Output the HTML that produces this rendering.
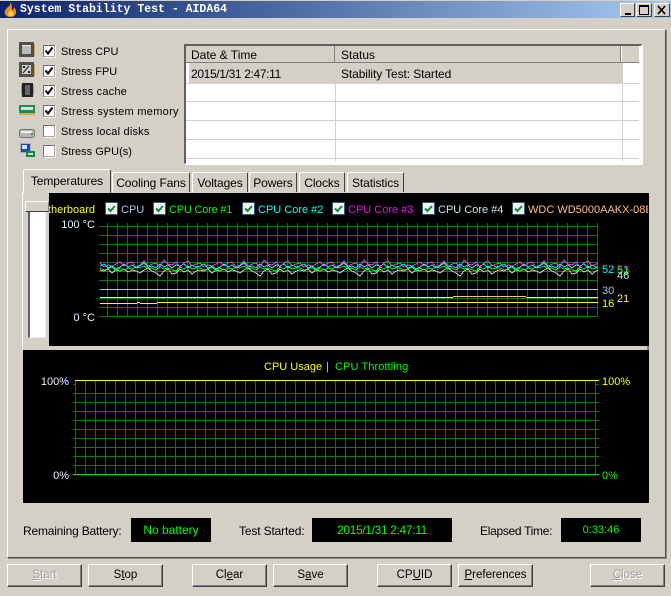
<!DOCTYPE html>
<html><head><meta charset="utf-8"><style>
html,body{margin:0;padding:0;overflow:hidden}
body{width:671px;height:596px;overflow:hidden;background:#d4d0c8;position:relative;font:11px/14px "Liberation Sans",sans-serif;color:#000}
.a,.t,.cb,.btn,.tab,.lg,.bx,.k{position:absolute}
.t{white-space:nowrap}
.f12{font-size:12px}
.wrap{position:absolute;left:0;top:0;width:671px;height:596px;z-index:5;overflow:hidden}
.cb{width:10px;height:10px;left:43px;background:#fff;border:1px solid #808080;border-color:#707070 #a8a8a0 #a8a8a0 #707070;box-shadow:1px 1px 0 #f4f2ec}
.cb svg{position:absolute;left:0;top:0}
.btn{top:564px;width:75px;height:23px;box-sizing:border-box;background:#d4d0c8;border:1px solid;border-color:#fff #404040 #404040 #fff;box-shadow:inset -1px -1px 0 #808080;text-align:center;line-height:21px;font-size:11.5px}
.dis{color:#a0a0a0;text-shadow:1px 1px 0 #fff}
.tab{top:172px;height:20px;box-sizing:border-box;border:1px solid;border-color:#fff #404040 transparent #fff;border-bottom:0;border-radius:2px 2px 0 0;text-align:center;line-height:20px;background:#d4d0c8;font-size:12px;letter-spacing:-.1px}
.lg{top:202px;width:11px;height:11px;background:#f4f4f4;border:1px solid #2f5a80}
.lg svg{position:absolute;left:0;top:0}
.l{position:absolute;top:203px;white-space:nowrap;line-height:14px}
.bx{background:#000;color:#0f0;text-align:center;top:518px;height:24px;line-height:24px;font-size:12px}
.k{width:15px;height:14px;background:#d4d0c8;top:3px;box-sizing:border-box;border:1px solid;border-color:#fff #404040 #404040 #fff}
.row{position:absolute;left:186px;width:453px;height:1px;background:#d4d0c8}
</style></head><body>

<!-- title bar -->
<div class="a" style="left:0;top:0;width:671px;height:1px;background:#d4d0c8"></div>
<div class="a" style="left:0;top:1px;width:671px;height:17px;background:linear-gradient(90deg,#0a246a,#a6caf0)"></div>
<svg class="a" style="left:3px;top:2px" width="15" height="16" viewBox="0 0 15 16"><path d="M7 0C8 3 6 4 4 6 2 8 1 10 2 12c1 2 3 3 6 3s5-2 5-5c0-2-1-4-2-5 0 2-1 3-2 3 0-3 0-6-2-8z" fill="#f08a1c"/><path d="M7 7c1 2-2 3-2 5 0 2 1 2 3 2s3-2 2-4c-1 0-2 0-3-3z" fill="#ffd040"/></svg>
<div class="t" style="left:20px;top:3px;font:bold 11.5px/14px 'Liberation Mono',monospace;color:#fff">System Stability Test - AIDA64</div>
<div class="k" style="left:620px"><div class="a" style="left:4px;top:9px;width:6px;height:2px;background:#000"></div></div>
<div class="k" style="left:636px;width:16px"><div class="a" style="left:2px;top:1px;width:8px;height:7px;border:1px solid #000;border-top-width:2px"></div></div>
<div class="k" style="left:654px;width:16px"><svg class="a" style="left:2px;top:1px" width="10" height="10"><path d="M1 1l7 8M8 1l-7 8" stroke="#000" stroke-width="1.7"/></svg></div>

<!-- outer panel -->
<div class="a" style="left:7px;top:29px;width:657px;height:527px;border:1px solid;border-color:#fff #505050 #505050 #fff;box-shadow:1px 1px 0 #908c84"></div>

<!-- icons -->
<svg class="a" style="left:18px;top:41px" width="18" height="120" viewBox="0 0 18 120">
<rect x="1" y="1" width="15" height="15" fill="#505050"/><rect x="4" y="4" width="9" height="9" fill="#bbb"/><rect x="4" y="4" width="9" height="1" fill="#eee"/><rect x="16" y="3" width="1" height="12" fill="#c8a040"/>
<rect x="1" y="21" width="15" height="15" fill="#505050"/><rect x="4" y="24" width="9" height="9" fill="#ccc"/><path d="M5 32l6-7" stroke="#222"/><rect x="5" y="25" width="2" height="2" fill="#222"/><rect x="10" y="30" width="2" height="2" fill="#222"/><rect x="16" y="23" width="1" height="12" fill="#c8a040"/>
<rect x="4" y="42" width="11" height="14" fill="#222"/><rect x="7" y="44" width="5" height="10" fill="#666"/><rect x="3" y="44" width="1" height="10" fill="#999"/><rect x="15" y="44" width="1" height="10" fill="#999"/>
<rect x="1" y="64" width="16" height="8" fill="#1d8a5a"/><rect x="3" y="66" width="12" height="3" fill="#cfe8d0"/><rect x="1" y="72" width="16" height="2" fill="#d0b040"/>
<rect x="1.500" y="88.500" width="15" height="8" rx="2" fill="#b8b8b8" stroke="#777"/><rect x="3" y="90" width="11" height="2" fill="#eee"/><rect x="13" y="92" width="2" height="2" fill="#3a3"/>
<rect x="2.500" y="102.500" width="10" height="9" fill="#1a48b0" stroke="#aab"/><rect x="4" y="104" width="5" height="4" fill="#cfe0ff"/><rect x="8" y="110" width="9" height="6" fill="#2a7a4a"/><rect x="10" y="112" width="5" height="2" fill="#9fc"/>
</svg>

<!-- stress options -->
<div class="cb" style="top:45px"><svg width="10" height="10"><path d="M1.500 4.500l2.500 3 4.500-6" fill="none" stroke="#000" stroke-width="2"/></svg></div>
<div class="cb" style="top:65px"><svg width="10" height="10"><path d="M1.500 4.500l2.500 3 4.500-6" fill="none" stroke="#000" stroke-width="2"/></svg></div>
<div class="cb" style="top:85px"><svg width="10" height="10"><path d="M1.500 4.500l2.500 3 4.500-6" fill="none" stroke="#000" stroke-width="2"/></svg></div>
<div class="cb" style="top:105px"><svg width="10" height="10"><path d="M1.500 4.500l2.500 3 4.500-6" fill="none" stroke="#000" stroke-width="2"/></svg></div>
<div class="cb" style="top:125px"></div>
<div class="cb" style="top:145px"></div>
<div class="t" style="left:61px;top:45px">Stress CPU</div>
<div class="t" style="left:61px;top:65px">Stress FPU</div>
<div class="t" style="left:61px;top:85px;letter-spacing:.2px">Stress cache</div>
<div class="t" style="left:61px;top:105px;letter-spacing:.3px">Stress system memory</div>
<div class="t" style="left:61px;top:125px;letter-spacing:.2px">Stress local disks</div>
<div class="t" style="left:61px;top:145px">Stress GPU(s)</div>

<!-- table -->
<div class="a" style="left:184px;top:44px;width:455px;height:117px;background:#fff;border-top:2px solid #606060;border-left:2px solid #606060;border-right:1px solid #fff;border-bottom:1px solid #fff;box-shadow:1px 1px 0 #fff"></div>
<div class="a" style="left:186px;top:46px;width:453px;height:16px;background:#d4d0c8"></div>
<div class="a" style="left:186px;top:62px;width:453px;height:1px;background:#808080"></div>
<div class="a" style="left:334px;top:46px;width:1px;height:16px;background:#808080"></div>
<div class="a" style="left:620px;top:46px;width:1px;height:16px;background:#808080"></div>
<div class="a" style="left:621px;top:46px;width:1px;height:16px;background:#fff"></div>
<div class="a" style="left:189px;top:63px;width:434px;height:20px;background:#d4d0c8"></div>
<div class="a" style="left:335px;top:83px;width:1px;height:78px;background:#d4d0c8"></div>
<div class="a" style="left:622px;top:83px;width:1px;height:78px;background:#d4d0c8"></div>
<div class="row" style="top:83px"></div><div class="row" style="top:101px"></div><div class="row" style="top:120px"></div><div class="row" style="top:139px"></div><div class="row" style="top:158px"></div>
<div class="t f12" style="left:191px;top:48px">Date &amp; Time</div>
<div class="t f12" style="left:341px;top:48px">Status</div>
<div class="t f12" style="left:191px;top:67px;letter-spacing:-.35px">2015/1/31 2:47:11</div>
<div class="t f12" style="left:341px;top:67px;letter-spacing:-.1px">Stability Test: Started</div>

<!-- tabs -->
<div class="a" style="left:22px;top:192px;width:1px;height:158px;background:#fff"></div>
<div class="a" style="left:647px;top:346px;width:2px;height:4px;background:#808080"></div>
<div class="tab" style="left:23px;top:169px;width:88px;height:24px;line-height:22px;z-index:2">Temperatures</div>
<div class="tab" style="left:112px;width:78px">Cooling Fans</div>
<div class="tab" style="left:192px;width:56px">Voltages</div>
<div class="tab" style="left:249px;width:48px">Powers</div>
<div class="tab" style="left:299px;width:46px">Clocks</div>
<div class="tab" style="left:347px;width:57px">Statistics</div>

<!-- slider -->
<div class="a" style="left:28px;top:212px;width:15px;height:125px;background:#fff;border-left:2px solid #606060;border-right:1px solid #eee;border-bottom:1px solid #eee"></div>
<div class="a" style="left:25px;top:201px;width:24px;height:11px;box-sizing:border-box;background:#d4d0c8;border:1px solid;border-color:#fff #808080 #404040 #fff"></div>

<!-- chart 1 -->
<div class="a" style="left:49px;top:193px;width:600px;height:153px;background:#000;overflow:hidden;z-index:3">
  <div class="l" style="right:554px;top:10px;color:#ff0">Motherboard</div>
</div>
<div class="wrap">
<div class="lg" style="left:105px"><svg width="11" height="11"><path d="M2 5.500l2.500 2.500 4.500-5" fill="none" stroke="#128a2c" stroke-width="2"/></svg></div>
<div class="l" style="left:121px;color:#a6caf0">CPU</div>
<div class="lg" style="left:153px"><svg width="11" height="11"><path d="M2 5.500l2.500 2.500 4.500-5" fill="none" stroke="#128a2c" stroke-width="2"/></svg></div>
<div class="l" style="left:169px;color:#0f0;letter-spacing:-.2px">CPU Core #1</div>
<div class="lg" style="left:242px"><svg width="11" height="11"><path d="M2 5.500l2.500 2.500 4.500-5" fill="none" stroke="#128a2c" stroke-width="2"/></svg></div>
<div class="l" style="left:258px;color:#0ff">CPU Core #2</div>
<div class="lg" style="left:332px"><svg width="11" height="11"><path d="M2 5.500l2.500 2.500 4.500-5" fill="none" stroke="#128a2c" stroke-width="2"/></svg></div>
<div class="l" style="left:348px;color:#f0f">CPU Core #3</div>
<div class="lg" style="left:422px"><svg width="11" height="11"><path d="M2 5.500l2.500 2.500 4.500-5" fill="none" stroke="#128a2c" stroke-width="2"/></svg></div>
<div class="l" style="left:438px;color:#c8e4e8">CPU Core #4</div>
<div class="lg" style="left:512px"><svg width="11" height="11"><path d="M2 5.500l2.500 2.500 4.500-5" fill="none" stroke="#128a2c" stroke-width="2"/></svg></div>
<div style="position:absolute;left:528px;top:203px;width:120px;overflow:hidden"><div style="white-space:nowrap;color:#ffc080">WDC WD5000AAKX-08E</div></div>

<div class="t" style="right:576px;top:218px;color:#e8f4ff">100 °C</div>
<div class="t" style="right:576px;top:311px;color:#e8f4ff">0 °C</div>

<div class="a" style="left:107px;top:223px;width:491px;height:94px;background:repeating-linear-gradient(90deg,#008000 0 1px,transparent 1px 10px)"></div>
<div class="a" style="left:99px;top:226px;width:499px;height:91px;background:repeating-linear-gradient(180deg,#008000 0 1px,transparent 1px 9px)"></div>

<svg class="a" style="left:100px;top:255px" width="498" height="55" viewBox="0 0 498 55" shape-rendering="crispEdges">
<defs>
<polyline id="w" fill="none" stroke="#c8d4c8" points="0,15 4,16 8,14 12,18 16,15 20,16 24,14 28,17 32,15 36,16 40,18 44,15 48,13 52,16 56,18 60,21 64,16 68,14 72,19 76,18 80,14 84,17 88,15 92,19 96,16 100,15"/>
<polyline id="g" fill="none" stroke="#00ff00" points="0,13 4,15 8,14 12,12 16,16 20,13 24,15 28,13 32,14 36,12 40,13 44,11 48,14 52,13 56,15 60,12 64,14 68,13 72,15 76,16 80,12 84,14 88,11 92,14 96,13 100,13"/>
<polyline id="c" fill="none" stroke="#00ffff" points="0,11 4,9 8,13 12,11 16,14 20,12 24,9 28,12 32,10 36,13 40,11 44,8 48,12 52,11 56,13 60,9 64,12 68,10 72,13 76,10 80,11 84,9 88,13 92,10 96,12 100,11"/>
<polyline id="m" fill="none" stroke="#ff40ff" points="0,8 4,12 8,10 12,11 16,9 20,7 24,11 28,8 32,7 36,12 40,10 44,6 48,11 52,9 56,8 60,12 64,5 68,9 72,10 76,7 80,12 84,8 88,6 92,11 96,9 100,8"/>
</defs>
<use href="#w"/><use href="#w" x="100"/><use href="#w" x="200"/><use href="#w" x="300"/><use href="#w" x="400"/>
<use href="#g"/><use href="#g" x="100"/><use href="#g" x="200"/><use href="#g" x="300"/><use href="#g" x="400"/>
<use href="#c"/><use href="#c" x="100"/><use href="#c" x="200"/><use href="#c" x="300"/><use href="#c" x="400"/>
<use href="#m"/><use href="#m" x="100"/><use href="#m" x="200"/><use href="#m" x="300"/><use href="#m" x="400"/>
</svg>
<div class="a" style="left:100px;top:289px;width:498px;height:1px;background:#a6caf0"></div>
<div class="a" style="left:100px;top:297px;width:353px;height:1px;background:#ffec90"></div>
<div class="a" style="left:453px;top:296px;width:73px;height:1px;background:#ffc080"></div>
<div class="a" style="left:526px;top:297px;width:72px;height:1px;background:#ffec90"></div>
<div class="a" style="left:100px;top:303px;width:37px;height:1px;background:#ff0"></div>
<div class="a" style="left:137px;top:302px;width:3px;height:1px;background:#ff0"></div>
<div class="a" style="left:140px;top:303px;width:17px;height:1px;background:#ff0"></div>
<div class="a" style="left:157px;top:302px;width:441px;height:1px;background:#ff0"></div>

<div class="t" style="left:602px;top:263px;color:#0ff">52</div>
<div class="t" style="left:617px;top:263px;color:#f0f">53</div>
<div class="t" style="left:617px;top:264px;color:#0f0">51</div>
<div class="t" style="left:617px;top:269px;color:#c8e4e8">46</div>
<div class="t" style="left:602px;top:284px;color:#a6caf0">30</div>
<div class="t" style="left:617px;top:292px;color:#ffe0a0">21</div>
<div class="t" style="left:602px;top:297px;color:#ff0">16</div>

<!-- chart 2 -->
<div class="a" style="left:23px;top:350px;width:626px;height:153px;background:#000"></div>
<div class="t" style="left:264px;top:360px;color:#ff0">CPU Usage</div>
<div class="t" style="left:326px;top:360px;color:#a6caf0">|</div>
<div class="t" style="left:335px;top:360px;color:#0f0;letter-spacing:.1px">CPU Throttling</div>
<div class="t" style="right:602px;top:375px;color:#e8f4ff">100%</div>
<div class="t" style="right:602px;top:469px;color:#e8f4ff">0%</div>
<div class="t" style="left:602px;top:375px;color:#ff0">100%</div>
<div class="t" style="left:602px;top:469px;color:#0f0">0%</div>
<div class="a" style="left:75px;top:380px;width:521px;height:94px;background:repeating-linear-gradient(90deg,#008000 0 1px,transparent 1px 10px)"></div>
<div class="a" style="left:73px;top:393px;width:526px;height:73px;background:repeating-linear-gradient(180deg,#008000 0 1px,transparent 1px 9px)"></div>
<div class="a" style="left:73px;top:384px;width:2px;height:1px;background:#008000"></div>
<div class="a" style="left:596px;top:384px;width:3px;height:1px;background:#008000"></div>
<div class="a" style="left:75px;top:380px;width:524px;height:1px;background:#ff0"></div>
<div class="a" style="left:73px;top:474px;width:526px;height:1px;background:#10d810"></div>
</div>

<!-- status -->
<div class="t f12" style="left:23px;top:524px;letter-spacing:-.2px">Remaining Battery:</div>
<div class="bx" style="left:131px;width:80px">No battery</div>
<div class="t f12" style="left:239px;top:524px;letter-spacing:-.15px">Test Started:</div>
<div class="bx" style="left:312px;width:140px;letter-spacing:-.35px">2015/1/31 2:47:11</div>
<div class="t f12" style="left:480px;top:524px;letter-spacing:-.3px">Elapsed Time:</div>
<div class="bx" style="left:561px;width:80px;font-size:11px">0:33:46</div>

<!-- buttons -->
<div class="btn dis" style="left:7px"><u>S</u>tart</div>
<div class="btn" style="left:88px">S<u>t</u>op</div>
<div class="btn" style="left:192px">Cl<u>e</u>ar</div>
<div class="btn" style="left:273px">S<u>a</u>ve</div>
<div class="btn" style="left:377px">CP<u>U</u>ID</div>
<div class="btn" style="left:458px"><u>P</u>references</div>
<div class="btn dis" style="left:590px"><u>C</u>lose</div>
</body></html>
